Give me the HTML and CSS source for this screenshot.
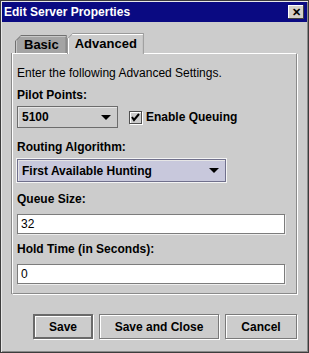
FILE: index.html
```html
<!DOCTYPE html>
<html lang="en">
<head>
  <meta charset="UTF-8">
  <title>Edit Server Properties</title>
  <link rel="stylesheet" href="styles.css">
</head>
<body>
<div class="window">
  <div class="titlebar">
    <span class="title">Edit Server Properties</span>
    <span class="close">&#x2715;</span>
  </div>
  <div class="tabs">
    <div class="tab basic"><span>Basic</span></div>
    <div class="tab active"><span>Advanced</span></div>
  </div>
  <div class="panel">
    <p class="intro">Enter the following Advanced Settings.</p>
    <div class="label">Pilot Points:</div>
    <div class="row">
      <div class="combo small">
        <span>5100</span>
        <i class="arrow"></i>
      </div>
      <label class="check">
        <span class="box">
          <svg width="9" height="9" viewBox="0 0 9 9"><path d="M1 4 L3 7 L8 1" fill="none" stroke="#000" stroke-width="2"/></svg>
        </span>
        Enable Queuing
      </label>
    </div>
    <div class="label gap">Routing Algorithm:</div>
    <div class="combo wide focused">
      <span>First Available Hunting</span>
      <i class="arrow"></i>
    </div>
    <div class="label gap-sm">Queue Size:</div>
    <div class="field">32</div>
    <div class="label gap-xs">Hold Time (in Seconds):</div>
    <div class="field">0</div>
  </div>
  <div class="buttons">
    <button class="btn default">Save</button>
    <button class="btn">Save and Close</button>
    <button class="btn">Cancel</button>
  </div>
</div>
</body>
</html>
```

FILE: styles.css
```css
html, body {
  margin: 0;
  padding: 0;
  background: #fff;
}
.window {
  width: 309px;
  height: 353px;
  box-sizing: border-box;
  background: #cccccc;
  border: 1px solid #3c3c3c;
  box-shadow: inset 1px 1px 0 #e8e8e8, inset -1px -1px 0 #8a8a8a;
  padding: 1px;
  font-family: "Liberation Sans", Arial, sans-serif;
  font-size: 12px;
  color: #000;
}
.titlebar {
  height: 20px;
  background: #0a0a82;
  color: #fff;
  display: flex;
  align-items: center;
  justify-content: space-between;
  padding: 0 3px 0 2px;
}
.title {
  font-weight: bold;
  font-size: 12px;
}
.close {
  width: 16px;
  height: 14px;
  background: #d4d0c8;
  color: #000;
  font-size: 11px;
  font-weight: bold;
  line-height: 14px;
  text-align: center;
  box-shadow: inset -1px -1px 0 #404040, inset 1px 1px 0 #fff;
}
.tabs {
  display: flex;
  align-items: flex-end;
  padding: 11px 0 0 12px;
  height: 20px;
  position: relative;
  z-index: 1;
}
.tab {
  clip-path: polygon(6px 0, 100% 0, 100% 100%, 0 100%, 0 6px);
  padding: 1px 1px 0 1px;
}
.tab span {
  display: block;
  clip-path: polygon(5px 0, 100% 0, 100% 100%, 0 100%, 0 5px);
  font-weight: bold;
  font-size: 13px;
}
.basic {
  background: #707070;
  height: 18px;
  box-sizing: border-box;
  margin-left: 1px;
}
.basic span {
  background: #a4a4a4;
  height: 17px;
  line-height: 17px;
  padding: 0 7px 0 8px;
  box-shadow: inset 1px 1px 0 #c8c8c8;
}
.active {
  background: #9a9a9a;
  height: 21px;
  box-sizing: border-box;
  margin-bottom: -1px;
}
.active span {
  background: #cccccc;
  height: 20px;
  line-height: 19px;
  padding: 0 6px 0 7px;
  box-shadow: inset 1px 1px 0 #fff;
}
.panel {
  margin: 0 10px 0 10px;
  height: 241px;
  box-sizing: border-box;
  border: 1px solid #8a8a8a;
  border-left-color: #fff;
  border-top-color: #fff;
  box-shadow: -1px 0 0 #8a8a8a, 1px 1px 0 #fff;
  padding: 0 11px 0 4px;
}
.intro {
  margin: 12px 0 0 0;
  line-height: 15px;
}
.label {
  font-weight: bold;
  margin-top: 7px;
  line-height: 15px;
}
.label.gap { margin-top: 12px; }
.label.gap-sm { margin-top: 10px; }
.label.gap-xs { margin-top: 8px; }
.row {
  display: flex;
  align-items: center;
  margin-top: 3px;
}
.combo {
  display: flex;
  align-items: center;
  justify-content: space-between;
  box-sizing: border-box;
  border: 1px solid #6c6c6c;
  box-shadow: inset 1px 1px 0 #e6e6e6;
  font-weight: bold;
  padding: 0 6px 0 4px;
}
.combo.small {
  width: 101px;
  height: 22px;
}
.combo.wide {
  width: 209px;
  height: 23px;
  margin-top: 4px;
}
.combo.focused {
  background: #c8c8dc;
  border-color: #70708c;
  outline: 1px solid #f4f4f4;
}
.arrow {
  width: 0;
  height: 0;
  border-left: 5px solid transparent;
  border-right: 5px solid transparent;
  border-top: 5px solid #000;
}
.check {
  display: flex;
  align-items: center;
  font-weight: bold;
  margin-left: 11px;
  gap: 4px;
}
.box {
  width: 11px;
  height: 11px;
  border: 1px solid #505050;
  box-shadow: 1px 1px 0 #fff, inset 1px 1px 0 #fff;
  display: flex;
  align-items: center;
  justify-content: center;
}
.field {
  width: 268px;
  height: 20px;
  box-sizing: border-box;
  background: #fff;
  border: 1px solid #7c7c7c;
  box-shadow: 1px 1px 0 #eee;
  margin-top: 7px;
  padding: 0 3px;
  line-height: 18px;
}
.buttons {
  display: flex;
  justify-content: flex-end;
  gap: 6px;
  padding: 20px 10px 0 0;
}
.btn {
  font-family: "Liberation Sans", Arial, sans-serif;
  font-weight: bold;
  font-size: 12px;
  height: 25px;
  background: #cccccc;
  border: 1px solid #7a7a7a;
  box-shadow: inset 1px 1px 0 #fff, 1px 1px 0 #fff;
  padding: 0;
  color: #000;
}
.btn.default {
  width: 60px;
  border: 2px solid #6a6a6a;
}
.btn:nth-child(2) { width: 120px; }
.btn:nth-child(3) { width: 72px; }
```
